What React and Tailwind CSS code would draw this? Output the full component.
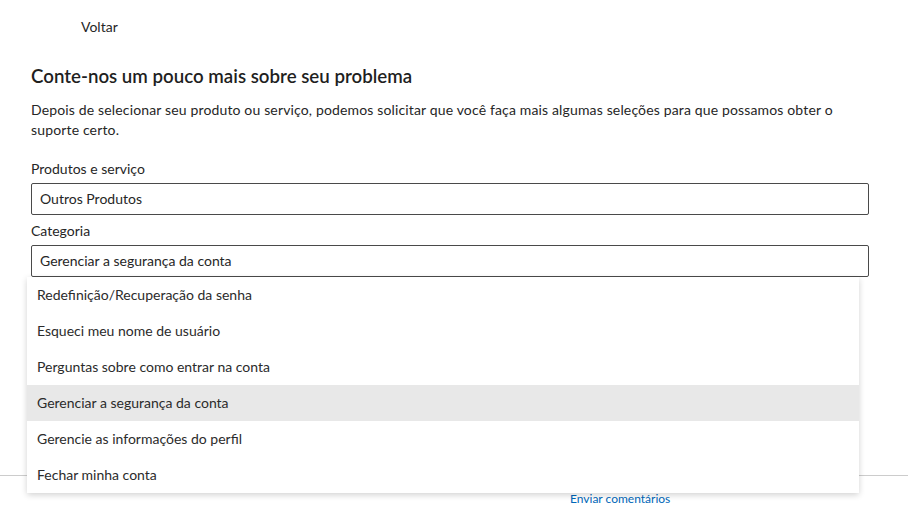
import React from "react";

const options = [
  "Redefinição/Recuperação da senha",
  "Esqueci meu nome de usuário",
  "Perguntas sobre como entrar na conta",
  "Gerenciar a segurança da conta",
  "Gerencie as informações do perfil",
  "Fechar minha conta",
];

const App = () => {
  const selected = "Gerenciar a segurança da conta";

  return (
    <div className="relative h-[519px] overflow-hidden bg-white font-['Lato','Liberation_Sans',sans-serif] text-[#262626]">
      <div className="pl-[81px] pt-[17px] text-[14px] leading-5">Voltar</div>

      <div className="w-[869px] pl-[31px]">
        <h2 className="mt-[27px] text-[18.7px] font-semibold leading-6 text-[#1f1f1f]">
          Conte-nos um pouco mais sobre seu problema
        </h2>
        <p className="mt-[12px] text-[14px] leading-5 tracking-[0.15px]">
          Depois de selecionar seu produto ou serviço, podemos solicitar que você faça mais algumas seleções para que possamos obter o suporte certo.
        </p>

        <label className="mt-[19px] block text-[14px] leading-5">Produtos e serviço</label>
        <div className="mt-[4px] flex h-[32px] items-center rounded-[2px] border border-[#4a4a4a] px-[8px] pb-[2px] text-[14px]">
          Outros Produtos
        </div>

        <label className="mt-[6px] block text-[14px] leading-5">Categoria</label>
        <div className="mt-[4px] flex h-[32px] items-center rounded-[2px] border border-[#4a4a4a] px-[8px] pb-[2px] text-[14px]">
          {selected}
        </div>
      </div>

      {/* footer */}
      <div className="mt-[198px] border-t border-[#cccccc]">
        <div className="pl-[570px] pt-[15px] text-[12px] leading-4 text-[#0067b8]">Enviar comentários</div>
      </div>

      {/* open dropdown list */}
      <ul className="absolute left-[27px] top-[277px] w-[832px] rounded-b-[2px] bg-white shadow-[0_2px_6px_rgba(0,0,0,0.18)]">
        {options.map((opt) => (
          <li
            key={opt}
            className={
              "flex h-[36px] items-center pb-[2px] pl-[10px] text-[14px] text-[#2b2b2b] " +
              (opt === selected ? "bg-[#e8e8e8]" : "bg-white")
            }
          >
            {opt}
          </li>
        ))}
      </ul>
    </div>
  );
};

export default App;
